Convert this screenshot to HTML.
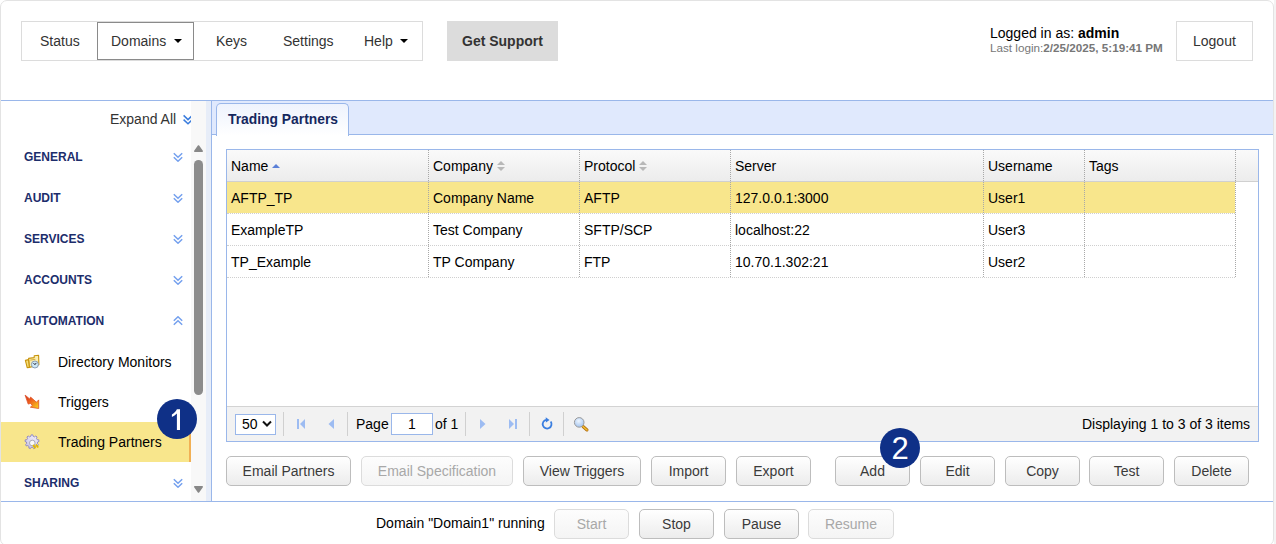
<!DOCTYPE html>
<html><head><meta charset="utf-8">
<style>
html,body{margin:0;padding:0;width:1276px;height:544px;overflow:hidden;background:#fff;}
body{font-family:"Liberation Sans",sans-serif;font-size:14px;color:#000;position:relative;}
.a{position:absolute;}
.t{position:absolute;white-space:pre;line-height:16px;}
#outer{left:0;top:0;width:1272px;height:544px;border:1px solid #e3e3e3;border-radius:7px;}
.navbox{left:21px;top:21px;width:400px;height:38px;border:1px solid #dcdcdc;}
.domains{left:97px;top:22px;width:95px;height:36px;border:1px solid #8a8a8a;}
.caret{position:absolute;width:0;height:0;border-left:4px solid transparent;border-right:4px solid transparent;border-top:4px solid #000;}
.nav{color:#333;}
.gs{left:447px;top:21px;width:111px;height:40px;background:#dcdcdc;}
.logout{left:1176px;top:21px;width:75px;height:38px;border:1px solid #dcdcdc;}
.hline{left:1px;top:100px;width:1272px;height:1px;background:#9ab7ea;}
.strip{left:206px;top:101px;width:5px;height:400px;background:#e7edf8;}
.vline{left:211px;top:101px;width:1px;height:400px;background:#9ab7ea;}
.tabbar{left:212px;top:101px;width:1061px;height:33px;background:#e0e9fd;}
.tabline{left:212px;top:134px;width:1061px;height:1px;background:#9ab7ea;}
.tab{left:216px;top:103px;width:131px;height:32px;border:1px solid #9ab7ea;border-bottom:none;border-radius:5px 5px 0 0;background:linear-gradient(#eef3fd,#fff);}
.sh{color:#1c2d6b;font-weight:bold;font-size:12px;}
.chev{position:absolute;}
.grid{left:226px;top:149px;width:1031px;height:291px;border:1px solid #9ab7ea;}
.ghead{left:227px;top:150px;width:1031px;height:31px;background:linear-gradient(#fafafa,#ececec);border-bottom:1px solid #d0d0d0;}
.cdiv{position:absolute;width:0;border-left:1px dotted #a8a8a8;}
.rdiv{position:absolute;height:0;border-top:1px dotted #cfcfcf;}
.sel{left:227px;top:182px;width:1008px;height:31px;background:#f8e68c;}
.pager{left:227px;top:406px;width:1031px;height:34px;background:#f2f2f2;border-top:1px solid #d3d3d3;}
.sep{position:absolute;top:412px;width:1px;height:24px;background:#d0d0d0;}
.btn{position:absolute;top:456px;height:28px;border:1px solid #bdbdbd;border-radius:5px;background:linear-gradient(#ffffff,#ececec);color:#3a3a3a;text-align:center;line-height:28px;font-size:14px;}
.btn.dis{color:#a8a8a8;border-color:#dcdcdc;background:linear-gradient(#fdfdfd,#f4f4f4);}
.badge{position:absolute;width:40px;height:40px;border-radius:50%;background:#0f3087;color:#fff;font-size:31px;text-align:center;line-height:40px;}
.fline{left:1px;top:501px;width:1272px;height:1px;background:#9ab7ea;}
</style></head><body>
<div class="a" style="left:1274px;top:0;width:2px;height:544px;background:#f3f3f3;"></div>
<div id="outer" class="a"></div>

<!-- top nav -->
<div class="a navbox"></div>
<div class="a domains"></div>
<div class="t nav" style="left:40px;top:33px;">Status</div>
<div class="t nav" style="left:111px;top:33px;">Domains</div>
<div class="caret" style="left:174px;top:39px;"></div>
<div class="t nav" style="left:216px;top:33px;">Keys</div>
<div class="t nav" style="left:283px;top:33px;">Settings</div>
<div class="t nav" style="left:364px;top:33px;">Help</div>
<div class="caret" style="left:400px;top:39px;"></div>
<div class="a gs"></div>
<div class="t" style="left:462px;top:33px;font-weight:bold;color:#333;">Get Support</div>
<div class="t" style="left:990px;top:25px;">Logged in as: <b>admin</b></div>
<div class="t" style="left:990px;top:40px;font-size:11.7px;color:#777;">Last login:<b>2/25/2025, 5:19:41 PM</b></div>
<div class="a logout"></div>
<div class="t nav" style="left:1193px;top:33px;">Logout</div>

<div class="a hline"></div>

<!-- sidebar -->
<div class="t" style="left:110px;top:111px;color:#333;">Expand All</div>
<svg class="chev" style="left:183px;top:114px" width="10" height="11" viewBox="0 0 10 11"><path d="M0.6 1.4L5 5.6L9.4 1.4M0.6 5.6L5 9.8L9.4 5.6" fill="none" stroke="#3b7ddd" stroke-width="1.5"/></svg>

<div class="t sh" style="left:24px;top:149px;">GENERAL</div>
<div class="t sh" style="left:24px;top:190px;">AUDIT</div>
<div class="t sh" style="left:24px;top:231px;">SERVICES</div>
<div class="t sh" style="left:24px;top:272px;">ACCOUNTS</div>
<div class="t sh" style="left:24px;top:313px;">AUTOMATION</div>
<div class="t sh" style="left:24px;top:475px;">SHARING</div>
<svg class="chev" style="left:173px;top:152px" width="10" height="10" viewBox="0 0 10 10"><path d="M0.8 1.2L5 5.2L9.2 1.2M0.8 5.2L5 9.2L9.2 5.2" fill="none" stroke="#74a0ee" stroke-width="1.5"/></svg>
<svg class="chev" style="left:173px;top:193px" width="10" height="10" viewBox="0 0 10 10"><path d="M0.8 1.2L5 5.2L9.2 1.2M0.8 5.2L5 9.2L9.2 5.2" fill="none" stroke="#74a0ee" stroke-width="1.5"/></svg>
<svg class="chev" style="left:173px;top:234px" width="10" height="10" viewBox="0 0 10 10"><path d="M0.8 1.2L5 5.2L9.2 1.2M0.8 5.2L5 9.2L9.2 5.2" fill="none" stroke="#74a0ee" stroke-width="1.5"/></svg>
<svg class="chev" style="left:173px;top:275px" width="10" height="10" viewBox="0 0 10 10"><path d="M0.8 1.2L5 5.2L9.2 1.2M0.8 5.2L5 9.2L9.2 5.2" fill="none" stroke="#74a0ee" stroke-width="1.5"/></svg>
<svg class="chev" style="left:173px;top:316px" width="10" height="10" viewBox="0 0 10 10"><path d="M0.8 4.8L5 0.8L9.2 4.8M0.8 8.8L5 4.8L9.2 8.8" fill="none" stroke="#74a0ee" stroke-width="1.5"/></svg>
<svg class="chev" style="left:173px;top:478px" width="10" height="10" viewBox="0 0 10 10"><path d="M0.8 1.2L5 5.2L9.2 1.2M0.8 5.2L5 9.2L9.2 5.2" fill="none" stroke="#74a0ee" stroke-width="1.5"/></svg>

<div class="a" style="left:191px;top:101px;width:15px;height:400px;background:#f8f8f8;"></div>
<div class="a" style="left:1px;top:422px;width:188px;height:40px;background:#f8e68c;border-right:2px solid #f1b055;"></div>
<div class="t" style="left:58px;top:354px;">Directory Monitors</div>
<div class="t" style="left:58px;top:394px;">Triggers</div>
<div class="t" style="left:58px;top:434px;">Trading Partners</div>


<!-- sidebar icons -->
<svg class="a" style="left:20px;top:350px" width="24" height="24" viewBox="0 0 24 24">
 <path d="M8.6 8.4 L14.2 7.6 L14.2 5.8 L18.6 5.3 L18.9 14.8 L9.4 17.4 Z" fill="#fbeeb0" stroke="#c8940c" stroke-width="1.1" stroke-linejoin="round"/>
 <path d="M5.4 10.4 L8.5 9.6 L9.3 17.5 L7.2 17.6 Z" fill="#f6e07a" stroke="#c8940c" stroke-width="1.1" stroke-linejoin="round"/>
 <path d="M10.2 10.1 L15.4 9.3" stroke="#d4a62a" stroke-width="0.9"/>
 <circle cx="14.9" cy="14.5" r="3.5" fill="#cde8f6" stroke="#8194ad" stroke-width="0.9"/>
 <path d="M13.5 13.1 L14.9 14.7 L16.3 12.9" fill="none" stroke="#2c2c3a" stroke-width="1"/>
</svg>
<svg class="a" style="left:20px;top:390px" width="24" height="24" viewBox="0 0 24 24">
 <defs><linearGradient id="tg" x1="0" y1="0" x2="1" y2="1"><stop offset="0" stop-color="#c8281a"/><stop offset="0.45" stop-color="#f0661e"/><stop offset="1" stop-color="#f8d81a"/></linearGradient></defs>
 <path d="M5.1 5.1 L9.6 8.9 L10.6 7.1 L16.4 12.2 L18.7 9.9 L18.7 18.5 L10.4 17.2 L12.4 15.3 L10.4 13.4 L8.2 14.1 Z" fill="url(#tg)" stroke="#e0532a" stroke-width="0.8" stroke-linejoin="round"/>
</svg>
<svg class="a" style="left:20px;top:430px" width="24" height="24" viewBox="0 0 24 24">
 <defs><linearGradient id="gg" x1="0.8" y1="0" x2="0.2" y2="1"><stop offset="0" stop-color="#f4f2fb"/><stop offset="1" stop-color="#c6c0e4"/></linearGradient></defs>
 <path d="M10.84 6.32 L11.17 4.85 L12.83 4.85 L13.16 6.32 L14.63 6.86 L15.83 5.94 L17.10 7.01 L16.41 8.35 L17.19 9.70 L18.70 9.78 L18.99 11.41 L17.60 12.00 L17.33 13.53 L18.43 14.56 L17.61 15.99 L16.16 15.55 L14.97 16.55 L15.16 18.05 L13.60 18.62 L12.78 17.35 L11.22 17.35 L10.40 18.62 L8.84 18.05 L9.03 16.55 L7.84 15.55 L6.39 15.99 L5.57 14.56 L6.67 13.53 L6.40 12.00 L5.01 11.41 L5.30 9.78 L6.81 9.70 L7.59 8.35 L6.90 7.01 L8.17 5.94 L9.37 6.86 Z" fill="url(#gg)" stroke="#8c84c0" stroke-width="0.9" stroke-linejoin="round"/>
 <circle cx="12.3" cy="13" r="2.8" fill="#fafafa" stroke="#9a9aa8" stroke-width="0.8"/>
 <path d="M13.6 15.6 L14.8 17.4 M16.4 15 L17.6 16.8" stroke="#e2b800" stroke-width="2" stroke-linecap="round"/>
</svg>

<!-- scrollbar -->
<svg class="a" style="left:193px;top:144px" width="11" height="9"><path d="M1.8 7.2L5.5 2L9.2 7.2Z" fill="#888" stroke="#888" stroke-width="1.6" stroke-linejoin="round"/></svg>
<div class="a" style="left:194px;top:160px;width:9px;height:235px;background:#8c8c8c;border-radius:4.5px;"></div>
<svg class="a" style="left:193px;top:485px" width="11" height="9"><path d="M1.8 1.8L5.5 7L9.2 1.8Z" fill="#888" stroke="#888" stroke-width="1.6" stroke-linejoin="round"/></svg>

<div class="a strip"></div>
<div class="a vline"></div>

<!-- tab panel -->
<div class="a tabbar"></div>
<div class="a tabline"></div>
<div class="a tab"></div>
<div class="t" style="left:228px;top:111px;font-weight:bold;font-size:13.85px;color:#15285e;">Trading Partners</div>

<!-- grid -->
<div class="a grid"></div>
<div class="a ghead"></div>
<div class="a sel"></div>
<div class="cdiv" style="left:428px;top:150px;height:127px;"></div>
<div class="cdiv" style="left:579px;top:150px;height:127px;"></div>
<div class="cdiv" style="left:730px;top:150px;height:127px;"></div>
<div class="cdiv" style="left:983px;top:150px;height:127px;"></div>
<div class="cdiv" style="left:1084px;top:150px;height:127px;"></div>
<div class="cdiv" style="left:1235px;top:150px;height:127px;"></div>
<div class="rdiv" style="left:227px;top:213px;width:1008px;"></div>
<div class="rdiv" style="left:227px;top:245px;width:1008px;"></div>
<div class="rdiv" style="left:227px;top:277px;width:1008px;"></div>

<div class="t" style="left:231px;top:158px;">Name</div>
<div class="t" style="left:433px;top:158px;">Company</div>
<div class="t" style="left:584px;top:158px;">Protocol</div>
<div class="t" style="left:735px;top:158px;">Server</div>
<div class="t" style="left:988px;top:158px;">Username</div>
<div class="t" style="left:1089px;top:158px;">Tags</div>

<div class="t" style="left:231px;top:190px;">AFTP_TP</div>
<div class="t" style="left:433px;top:190px;">Company Name</div>
<div class="t" style="left:584px;top:190px;">AFTP</div>
<div class="t" style="left:735px;top:190px;">127.0.0.1:3000</div>
<div class="t" style="left:988px;top:190px;">User1</div>

<div class="t" style="left:231px;top:222px;">ExampleTP</div>
<div class="t" style="left:433px;top:222px;">Test Company</div>
<div class="t" style="left:584px;top:222px;">SFTP/SCP</div>
<div class="t" style="left:735px;top:222px;">localhost:22</div>
<div class="t" style="left:988px;top:222px;">User3</div>

<div class="t" style="left:231px;top:254px;">TP_Example</div>
<div class="t" style="left:433px;top:254px;">TP Company</div>
<div class="t" style="left:584px;top:254px;">FTP</div>
<div class="t" style="left:735px;top:254px;">10.70.1.302:21</div>
<div class="t" style="left:988px;top:254px;">User2</div>

<!-- pager -->
<div class="a pager"></div>
<div class="a" style="left:235px;top:414px;width:39px;height:19px;border:1px solid #9ab7ea;background:#fff;"></div>
<div class="t" style="left:242px;top:416px;">50</div>
<div class="sep" style="left:283px;"></div>
<div class="sep" style="left:347px;"></div>
<div class="sep" style="left:465px;"></div>
<div class="sep" style="left:529px;"></div>
<div class="sep" style="left:563px;"></div>
<div class="t" style="left:356px;top:416px;">Page</div>
<div class="a" style="left:391px;top:413px;width:40px;height:20px;border:1px solid #9ab7ea;background:#fff;"></div>
<div class="t" style="left:408px;top:416px;">1</div>
<div class="t" style="left:435px;top:416px;">of 1</div>
<div class="t" style="left:1082px;top:416px;">Displaying 1 to 3 of 3 items</div>


<svg class="a" style="left:262px;top:420px" width="10" height="8" viewBox="0 0 10 8"><path d="M1 1.5 L5 5.5 L9 1.5" fill="none" stroke="#111" stroke-width="2"/></svg>
<svg class="a" style="left:296px;top:418px" width="10" height="12" viewBox="0 0 10 12"><rect x="1" y="1" width="2" height="10" fill="#9dbcf2"/><path d="M9 1 L4 6 L9 11 Z" fill="#9dbcf2"/></svg>
<svg class="a" style="left:327px;top:418px" width="8" height="12" viewBox="0 0 8 12"><path d="M7 1 L1.5 6 L7 11 Z" fill="#9dbcf2"/></svg>
<svg class="a" style="left:479px;top:418px" width="8" height="12" viewBox="0 0 8 12"><path d="M1 1 L6.5 6 L1 11 Z" fill="#9dbcf2"/></svg>
<svg class="a" style="left:508px;top:418px" width="10" height="12" viewBox="0 0 10 12"><path d="M1 1 L6 6 L1 11 Z" fill="#9dbcf2"/><rect x="7" y="1" width="2" height="10" fill="#9dbcf2"/></svg>
<svg class="a" style="left:540px;top:416px" width="14" height="14" viewBox="0 0 14 14"><path d="M10.7 5.6 A4.4 4.4 0 1 1 6.3 3.8" fill="none" stroke="#3a7ee0" stroke-width="1.8"/><path d="M5.7 1.3 L9.5 3.9 L5.9 6.5 Z" fill="#3a7ee0"/></svg>
<svg class="a" style="left:572px;top:415px" width="18" height="18" viewBox="0 0 18 18">
 <defs><radialGradient id="mg" cx="0.45" cy="0.35" r="0.6"><stop offset="0" stop-color="#eef6ff"/><stop offset="1" stop-color="#a9c8f0"/></radialGradient></defs>
 <path d="M11 11.5 L15 15" stroke="#b06a10" stroke-width="3" stroke-linecap="round"/>
 <path d="M11 11.5 L15 15" stroke="#f0c030" stroke-width="1.6" stroke-linecap="round"/>
 <circle cx="7.2" cy="7.4" r="4.8" fill="url(#mg)" stroke="#9a9a9a" stroke-width="1"/>
</svg>
<svg class="a" style="left:271px;top:163px" width="10" height="6" viewBox="0 0 10 6"><path d="M1 5 L5 1 L9 5 Z" fill="#5b80d8"/></svg>
<svg class="a" style="left:496px;top:160px" width="10" height="12" viewBox="0 0 10 12"><path d="M1 5 L5 1 L9 5 Z M1 7 L5 11 L9 7 Z" fill="#b8b8b8"/></svg>
<svg class="a" style="left:638px;top:160px" width="10" height="12" viewBox="0 0 10 12"><path d="M1 5 L5 1 L9 5 Z M1 7 L5 11 L9 7 Z" fill="#b8b8b8"/></svg>

<!-- buttons -->
<div class="btn" style="left:226px;width:123px;">Email Partners</div>
<div class="btn dis" style="left:361px;width:150px;">Email Specification</div>
<div class="btn" style="left:523px;width:116px;">View Triggers</div>
<div class="btn" style="left:651px;width:73px;">Import</div>
<div class="btn" style="left:736px;width:73px;">Export</div>
<div class="btn" style="left:835px;width:73px;">Add</div>
<div class="btn" style="left:920px;width:73px;">Edit</div>
<div class="btn" style="left:1005px;width:73px;">Copy</div>
<div class="btn" style="left:1089px;width:73px;">Test</div>
<div class="btn" style="left:1174px;width:73px;">Delete</div>

<div class="a fline"></div>

<!-- footer -->
<div class="t" style="left:376px;top:515px;">Domain "Domain1" running</div>
<div class="btn dis" style="left:554px;top:509px;width:73px;">Start</div>
<div class="btn" style="left:639px;top:509px;width:73px;">Stop</div>
<div class="btn" style="left:724px;top:509px;width:73px;">Pause</div>
<div class="btn dis" style="left:808px;top:509px;width:84px;">Resume</div>

<div class="badge" style="left:157px;top:399px;"></div>
<svg class="a" style="left:0;top:0" width="1276" height="544" viewBox="0 0 1276 544" pointer-events="none"><path d="M176.9 409.2 L180 409.2 L180 429.9 L176.9 429.9 L176.9 413.6 C175.4 415 173.8 416.1 171.9 417.1 L171.9 414.4 C173.9 413.3 175.8 411.5 176.9 409.2 Z" fill="#fff"/></svg>
<div class="badge" style="left:880px;top:428px;line-height:42px;">2</div>
</body></html>
